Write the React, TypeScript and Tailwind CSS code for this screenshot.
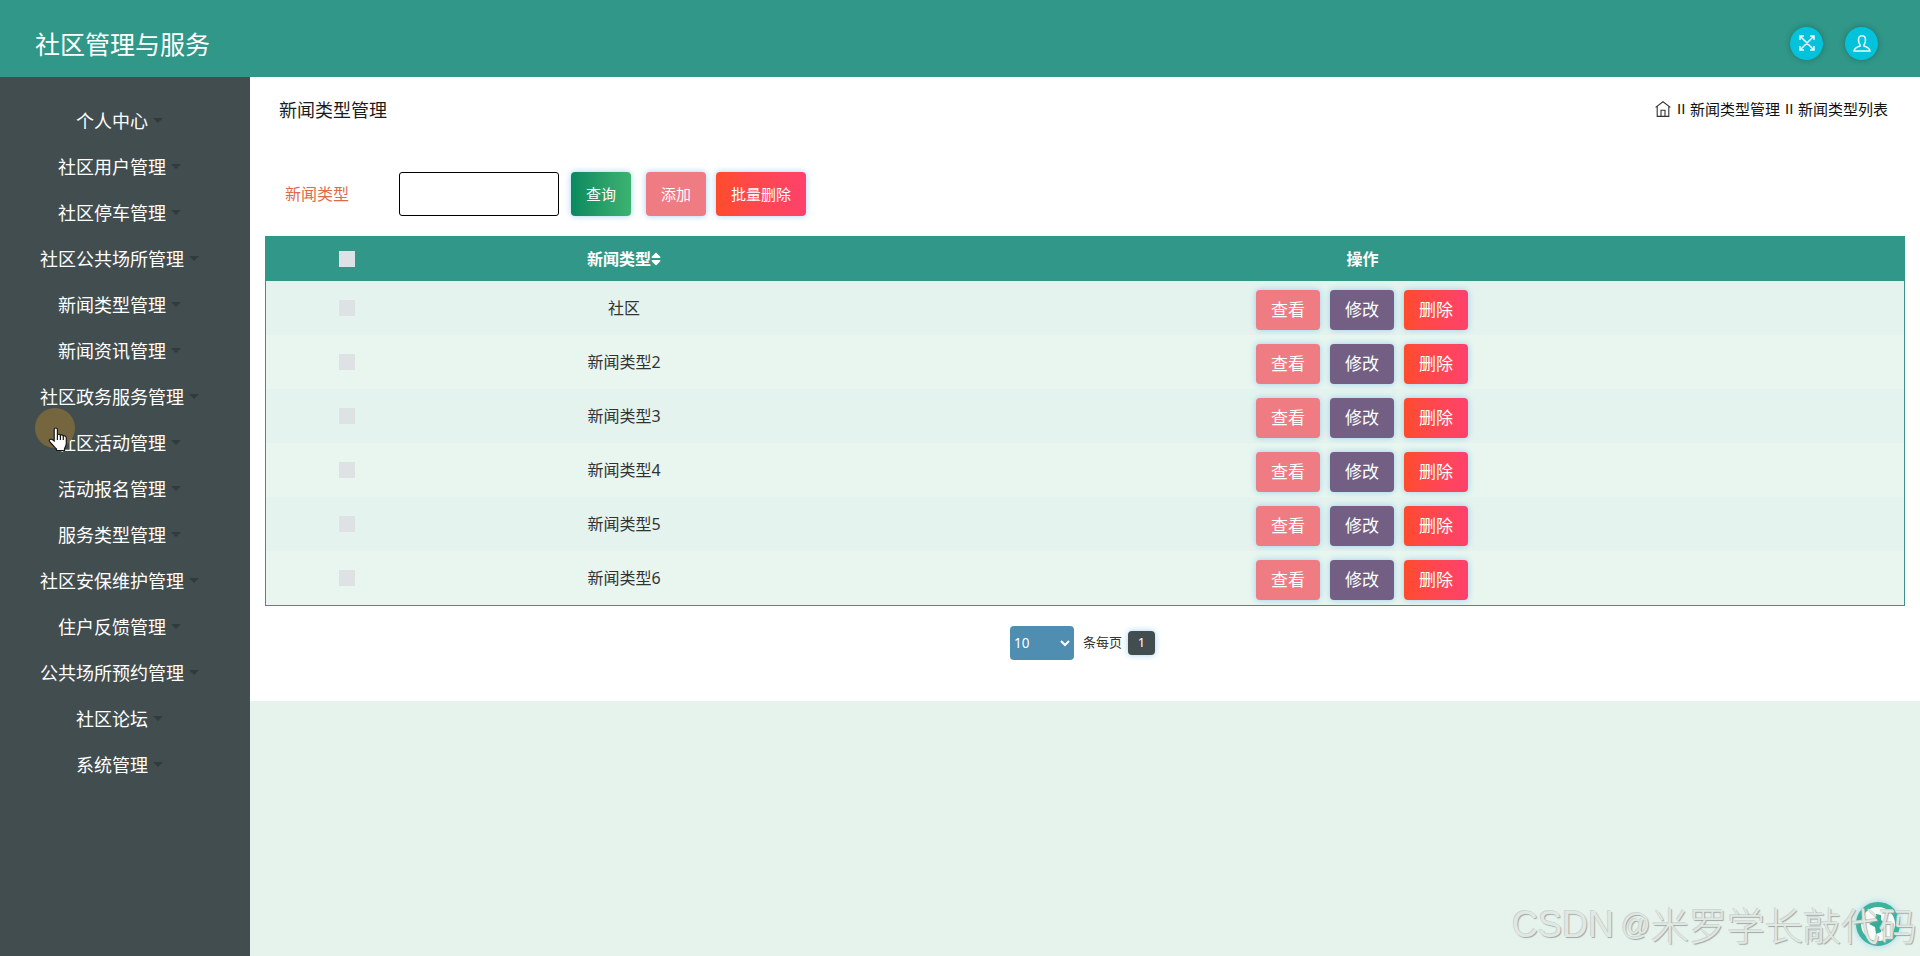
import { FaSort } from "react-icons/fa";

const menu = [
  "个人中心", "社区用户管理", "社区停车管理", "社区公共场所管理", "新闻类型管理",
  "新闻资讯管理", "社区政务服务管理", "社区活动管理", "活动报名管理", "服务类型管理",
  "社区安保维护管理", "住户反馈管理", "公共场所预约管理", "社区论坛", "系统管理",
];
const rows = ["社区", "新闻类型2", "新闻类型3", "新闻类型4", "新闻类型5", "新闻类型6"];

const glow = "shadow-[0_0_6px_rgba(120,190,240,0.7)]";
const action = `flex h-10 w-16 items-center justify-center rounded text-[17px] text-white ${glow}`;
const tool = `flex h-11 items-center justify-center rounded text-[15px] text-white ${glow}`;

function Header() {
  return (
    <header className="flex h-[77px] shrink-0 items-center justify-between bg-[#319788] pl-[35px] pr-[42px]">
      <h1 className="mt-[12px] text-[25px] leading-none text-white">社区管理与服务</h1>
      <div className="mt-[9px] flex gap-[22px]">
        <button className="flex size-[33px] items-center justify-center rounded-full bg-[#03c3dc] shadow-[0_0_6px_rgba(0,0,0,0.25)]">
          <svg width="16" height="16" viewBox="0 0 16 16" fill="none" stroke="#e9fbfd" strokeWidth="1.5">
            <path d="M1 5V1h4M11 1h4v4M15 11v4h-4M5 15H1v-4M1 1l14 14M15 1L1 15" />
          </svg>
        </button>
        <button className="flex size-[33px] items-center justify-center rounded-full bg-[#03c3dc] shadow-[0_0_6px_rgba(0,0,0,0.25)]">
          <svg width="18" height="17" viewBox="0 0 18 17" fill="none" stroke="#e9fbfd" strokeWidth="1.5">
            <path d="M7.200 10C6 8.700 5.500 7 5.500 5c0-2.700 1.300-4.200 3.500-4.200s3.500 1.500 3.500 4.200c0 2-.500 3.700-1.700 5v1c2.800.700 5.700 2 6.200 5H1c.500-3 3.400-4.300 6.200-5z" />
          </svg>
        </button>
      </div>
    </header>
  );
}

function Sidebar() {
  return (
    <nav className="relative w-[250px] shrink-0 bg-[#424d4f] pr-[11px] pt-[21px]">
      <ul>
        {menu.map((m) => (
          <li key={m} className="flex h-[46px] items-center justify-center text-[18px] text-white">
            <span>{m}</span>
            <span className="mb-px ml-[5px] border-x-[5px] border-t-[5px] border-x-transparent border-t-[#2f3b3c]" />
          </li>
        ))}
      </ul>
      <div className="absolute left-[35px] top-[331px] size-10 rounded-full bg-[#75663f]" />
      <svg className="absolute left-[48px] top-[350px]" width="20" height="25" viewBox="0 0 20 25" fill="#fff" stroke="#15191a" strokeWidth="1.200">
        <path d="M6.200 14V2.800c0-2.400 3.200-2.400 3.200 0V8c.600-1.200 2.700-.900 3 .500.700-1 2.600-.700 2.900.700 1-.700 3-.300 3 1.700v5.600c0 2-1 3.700-1.800 5.200V23.500H8.500V22C5.800 20 4 17 1.500 14.300c-1-1.500 1.200-3 2.800-1.700z" />
        <path d="M9.400 8v5M12.400 8.500V13M15.300 9.500V13" />
      </svg>
    </nav>
  );
}

function Content() {
  return (
    <section className="h-[624px] bg-white px-[15px]">
      <div className="flex h-[66px] items-center justify-between pl-[14px] pr-[17px]">
        <h2 className="text-[18px] text-[#1c1c1c]">新闻类型管理</h2>
        <div className="mb-[3px] flex h-[22px] items-center text-[15px] leading-[22px] text-[#111]">
          <svg className="mr-[6px] shrink-0" width="16" height="16" viewBox="0 0 16 16" fill="none" stroke="#333" strokeWidth="1.100">
            <path d="M.6 6.400L8 .8l7.400 5.600M2.200 5.500v9.900h11.600V5.500M6 15.400V9.200h4v6.200" />
          </svg>
          <span className="w-[13px] font-['Liberation_Sans',sans-serif]">II</span>
          <span className="mr-[5px]">新闻类型管理</span>
          <span className="w-[13px] font-['Liberation_Sans',sans-serif]">II</span>
          <span>新闻类型列表</span>
        </div>
      </div>
      <div className="mt-[29px] flex h-11 items-center pl-[20px]">
        <label className="w-[114px] text-[16px] text-[#dd6b49]">新闻类型</label>
        <input className="h-11 w-[160px] rounded-[3px] border border-black bg-white" />
        <button className={`${tool} ml-[12px] w-[60px] bg-linear-to-r from-[#07895f] to-[#3cb371]`}>查询</button>
        <button className={`${tool} ml-[15px] w-[60px] bg-[#ef7b83]`}>添加</button>
        <button className={`${tool} ml-[10px] w-[90px] bg-linear-to-r from-[#ff4b2b] to-[#ff416c]`}>批量删除</button>
      </div>
      <div className="mt-5 border border-t-0 border-[#40918d]">
        <div className="-mx-px grid h-[45px] grid-cols-[163px_392px_1fr] items-center justify-items-center bg-[#319788] text-[16px] font-bold text-white">
          <span className="size-4 bg-[#dee2e6]" />
          <span className="flex items-center">新闻类型<FaSort className="-mx-[3px]" size={16} /></span>
          <span>操作</span>
        </div>
        {rows.map((r, i) => (
          <div key={r} className={`grid h-[54px] grid-cols-[161px_394px_1fr] items-center justify-items-center text-[16px] text-[#333] ${i % 2 ? "bg-[#e8f6ef]" : "bg-[#e5f3ee]"}`}>
            <span className="size-4 bg-[#dee2e5]" />
            <span>{r}</span>
            <div className="mr-px mt-1 flex gap-[10px]">
              <button className={`${action} bg-[#ef7b83]`}>查看</button>
              <button className={`${action} bg-[#735f84]`}>修改</button>
              <button className={`${action} bg-linear-to-r from-[#ff4b2b] to-[#ff416c]`}>删除</button>
            </div>
          </div>
        ))}
      </div>
      <div className="mt-5 flex h-[34px] items-center justify-center pr-[5px] text-[13px] text-[#333]">
        <div className="flex h-[34px] w-16 items-center justify-between rounded bg-[#4f8eb0] px-[4px] text-[13.500px] text-white">
          <span>10</span>
          <svg width="10" height="7" viewBox="0 0 10 7" fill="none" stroke="#fff" strokeWidth="2"><path d="M1 1l4 4 4-4" /></svg>
        </div>
        <span className="ml-[9px]">条每页</span>
        <span className={`ml-[6px] flex h-6 w-[27px] items-center justify-center rounded bg-[#424d4f] text-white ${glow}`}>1</span>
      </div>
    </section>
  );
}

export default function App() {
  return (
    <div className="relative flex h-[956px] w-[1920px] flex-col overflow-hidden bg-[#e6f3ed] font-['Noto_Sans','Noto_Sans_CJK_SC',sans-serif]">
      <Header />
      <div className="flex flex-1">
        <Sidebar />
        <main className="flex-1"><Content /></main>
      </div>
      <div className="absolute left-[1856px] top-[902px] flex size-11 items-center justify-center rounded-full border-[5px] border-[#3cb39b] bg-[#f7fcfa] shadow-[0_0_6px_rgba(120,200,240,0.7)]">
        <svg width="20" height="22" viewBox="0 0 20 22" fill="#35ad94"><path d="M8 1l5 1v5l6 4-5 2-1 6-5 2-1-7-6-3 6-4z" /></svg>
      </div>
      <div className="absolute left-[1512px] top-[895px] flex items-center whitespace-nowrap font-['Noto_Sans_CJK_SC',sans-serif] text-[38px] font-light leading-[54px] text-[#e0e8e4] [text-shadow:1px_1px_1px_#a0a6a4,-1px_-1px_0_#d0d6d3]">
        <span className="w-[109px] pt-[3px] font-['Liberation_Sans',sans-serif] text-[36px]">CSDN</span>
        <span className="w-[30px] pt-[2px] font-['Liberation_Sans',sans-serif] text-[29px]">@</span>
        <span>米罗学长敲代码</span>
      </div>
    </div>
  );
}
